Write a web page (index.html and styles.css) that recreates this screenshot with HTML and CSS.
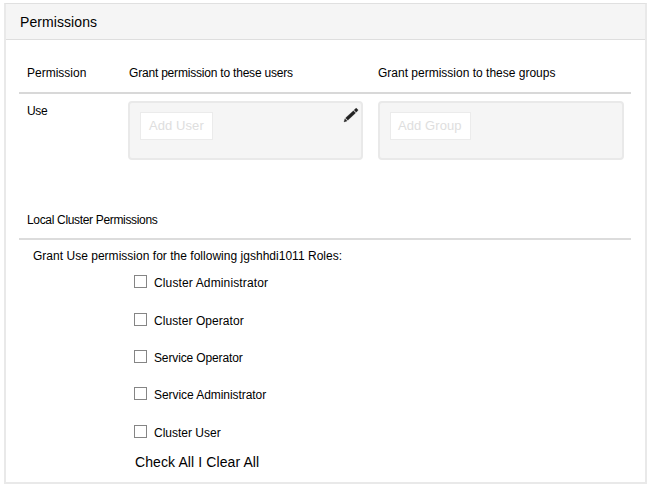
FILE: index.html
```
<!DOCTYPE html>
<html lang="en">
<head>
<meta charset="utf-8">
<title>Permissions</title>
<link rel="stylesheet" href="styles.css">
</head>
<body>
<section class="panel">
  <header class="panel-header"><span class="title">Permissions</span></header>
  <div class="panel-body">
    <div class="grid-row grid-head">
      <div><span class="h-perm">Permission</span></div>
      <div><span class="h-users">Grant permission to these users</span></div>
      <div><span class="h-groups">Grant permission to these groups</span></div>
    </div>
    <div class="grid-row grid-entry">
      <div class="use"><span>Use</span></div>
      <div class="well">
        <button class="add" type="button"><span>Add User</span></button>
        <svg class="pencil" width="16" height="16" viewBox="0 0 16 16"><path d="M1 14.9L1.9 11.8L4.1 14Z M2.5 11L10.4 3.7L12.6 5.9L4.8 13.3Z M11.1 3.1L12.6 1.6Q13.2 1.1 13.8 1.6L14.7 2.5Q15.2 3.1 14.7 3.7L13.2 5.2Z" fill="#222" stroke="#222" stroke-width=".3"/></svg>
      </div>
      <div class="well well-groups">
        <button class="add add-group" type="button"><span>Add Group</span></button>
      </div>
    </div>
    <h2 class="subhead"><span>Local Cluster Permissions</span></h2>
    <p class="note"><span>Grant Use permission for the following jgshhdi1011 Roles:</span></p>
    <div class="roles">
      <label><input type="checkbox"><span class="r1">Cluster Administrator</span></label>
      <label><input type="checkbox"><span class="r2">Cluster Operator</span></label>
      <label><input type="checkbox"><span class="r3">Service Operator</span></label>
      <label><input type="checkbox"><span class="r4">Service Administrator</span></label>
      <label><input type="checkbox"><span class="r5">Cluster User</span></label>
    </div>
    <div class="actions"><span>Check All I Clear All</span></div>
  </div>
</section>
</body>
</html>
```
FILE: styles.css
```
* { box-sizing: border-box; }
body {
  margin: 0;
  padding: 3px 4px;
  background: #fff;
  color: #000;
  font: 12px/16px "Liberation Sans", Arial, sans-serif;
}
.panel {
  width: 643px;
  height: 481px;
  border: 2px solid #e9e9e9;
  border-top: 1px solid #e0e0e0;
}
.panel-header {
  height: 36px;
  padding: 9px 14px;
  background: #f5f5f5;
  border-bottom: 1px solid #dedede;
  font-size: 14px;
  line-height: 18px;
}
.title { letter-spacing: 0.08px; }
.panel-body { padding: 0 13px; }
.grid-row {
  display: grid;
  grid-template-columns: 101px 235px 246px;
  column-gap: 0;
  width: 612px;
  padding-left: 8px;
}
.grid-row > :nth-child(3) { margin-left: 15px; width: 246px; }
.grid-head {
  height: 54px;
  padding-top: 25px;
  border-bottom: 2px solid #d8d8d8;
}
.grid-head > :nth-child(2) { padding-left: 1px; }
.h-users { letter-spacing: -0.2px; }
.grid-entry { padding-top: 7px; height: 110px; }
.use { padding-top: 2px; letter-spacing: -0.3px; }
.well {
  position: relative;
  height: 59px;
  padding: 9px 10px;
  background: #f5f5f5;
  border: 2px solid #e9e9e9;
  border-radius: 4px;
}
.add {
  display: block;
  width: 73px;
  height: 28px;
  padding: 0 0 0 8px;
  background: #fff;
  border: 1px solid #ebebeb;
  color: #dedede;
  font: 13px/26px "Liberation Sans", Arial, sans-serif;
  letter-spacing: 0.08px;
  text-align: left;
  white-space: nowrap;
}
.add-group { width: 81px; padding-left: 7px; }
.pencil { position: absolute; top: 4px; right: 2px; }
.subhead {
  width: 612px;
  height: 36px;
  margin: 0;
  padding: 8px 0 0 8px;
  border-bottom: 2px solid #dcdcdc;
  font-size: 12px;
  font-weight: 400;
  letter-spacing: -0.33px;
}
.note { margin: 8px 0 0; padding-left: 14px; letter-spacing: 0.02px; }
.roles { display: grid; grid-auto-rows: 37.4px; height: 179px; padding: 11.2px 0 0 115px; }
.roles label { display: flex; align-items: flex-start; gap: 7px; }
.roles input {
  appearance: none;
  width: 13px;
  height: 13px;
  margin: 0;
  border: 1px solid #858585;
  background: #fff;
}
.r1 { letter-spacing: 0.13px; }
.r2 { letter-spacing: 0.07px; }
.r3 { letter-spacing: -0.13px; }
.r4 { letter-spacing: -0.06px; }
.actions { padding: 11px 0 0 116px; font-size: 14px; letter-spacing: 0.1px; }
```
